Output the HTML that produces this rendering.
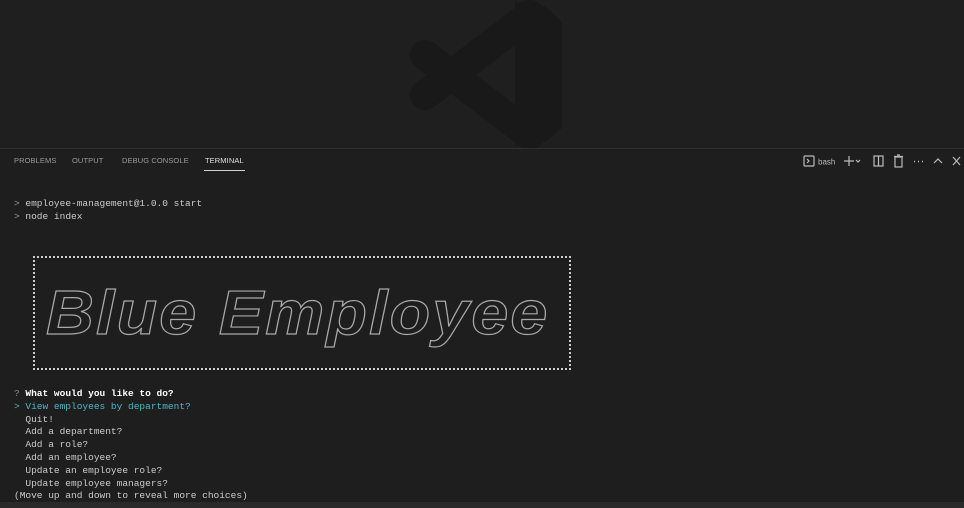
<!DOCTYPE html>
<html><head><meta charset="utf-8"><style>
html,body{margin:0;padding:0;width:964px;height:508px;overflow:hidden;background:#1e1e1e;}
.top{position:absolute;left:0;top:0;width:964px;height:148px;background:#1f1f1f;}
.sep{position:absolute;left:0;top:148px;width:964px;height:1px;background:#2e2e2e;}
.tabs{position:absolute;top:156px;font:7.5px "Liberation Sans",sans-serif;color:#9a9a9a;letter-spacing:0.1px;}
.t{position:absolute;white-space:nowrap;}
.mono{position:absolute;font:9.5px/12.8px "Liberation Mono",monospace;color:#cccccc;white-space:pre;}
.box{position:absolute;left:33px;top:256px;width:538px;height:114px;border:2px dotted #cfcfcf;box-sizing:border-box;}
.art{position:absolute;left:46px;top:274px;font:italic 900 62px/80px "Liberation Sans",sans-serif;color:transparent;-webkit-text-stroke:1.2px #a8a8a8;letter-spacing:2px;transform:scaleX(1.07);transform-origin:left;white-space:nowrap;}
.status{position:absolute;left:0;top:502px;width:964px;height:6px;background:#2a2a2a;}
</style></head><body>
<div class="top">
<svg width="964" height="148" style="position:absolute;left:0;top:0">
<g stroke="#191919" stroke-width="30" stroke-linecap="round" fill="none">
<path d="M425 95 L530 15"/><path d="M425 55 L530 135"/>
</g>
<path d="M515 2 L545 6 L562 22 L562 128 L545 142 L515 146 Z" fill="#191919"/>
</svg>
</div>
<div class="sep"></div>
<div class="tabs">
<span class="t" style="left:14px">PROBLEMS</span>
<span class="t" style="left:72px">OUTPUT</span>
<span class="t" style="left:122px">DEBUG CONSOLE</span>
<span class="t" style="left:205px;color:#e0e0e0">TERMINAL</span>
</div>
<div style="position:absolute;left:204px;top:170px;width:41px;height:1px;background:#cfcfcf"></div>
<svg width="170" height="20" style="position:absolute;left:794px;top:152px" fill="none" stroke="#bbb" stroke-width="1.2">
<rect x="10" y="4" width="10" height="10" rx="1"/><path d="M13 7 l2 2 l-2 2"/>
<text x="24" y="12.5" font-family="Liberation Sans" font-size="8" fill="#bbb" stroke="none">bash</text>
<path d="M50 9 h10 M55 4 v10"/><path d="M62 8 l2 2 l2 -2"/>
<rect x="80" y="4" width="9" height="10"/><path d="M84.5 4 v10"/>
<rect x="101" y="5" width="7" height="10"/><path d="M100 4.5 h9 M103 3 h3"/>
<path d="M120 9.5 h1 M124 9.5 h1 M128 9.5 h1" stroke-width="1.6"/>
<path d="M140 11 l4 -4 l4 4"/>
<path d="M159 5 l7 8 M166 5 l-7 8"/>
</svg>
<div class="mono" style="left:14px;top:198px"><span style="color:#999">&gt; </span>employee-management@1.0.0 start
<span style="color:#999">&gt; </span>node index</div>
<div class="box"></div>
<div class="art">Blue Employee</div>
<div class="mono" style="left:14px;top:388px"><span style="color:#888">? </span><b style="color:#fff">What would you like to do?</b>
<span style="color:#4fb7c7">&gt; View employees by department?</span>
  Quit!
  Add a department?
  Add a role?
  Add an employee?
  Update an employee role?
  Update employee managers?
(Move up and down to reveal more choices)</div>
<div class="status"></div>
</body></html>
